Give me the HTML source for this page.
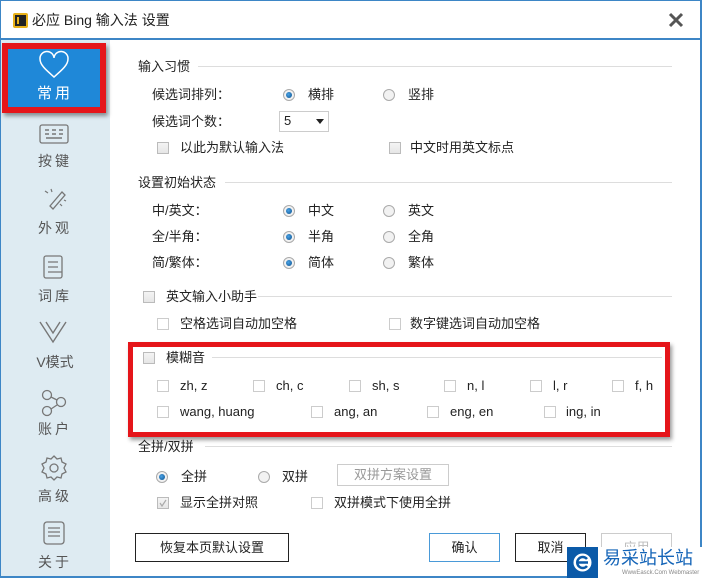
<!DOCTYPE html>
<html><head><meta charset="utf-8">
<style>
*{margin:0;padding:0;box-sizing:border-box}
body{width:702px;height:578px;overflow:hidden;background:#fff;position:relative;font-family:"Liberation Sans","Noto Sans CJK SC","Microsoft YaHei",sans-serif;font-size:13px;color:#222}
.a{position:absolute}
.t{position:absolute;line-height:16px;white-space:nowrap;font-size:13px}
.cb{position:absolute;width:12px;height:12px;border:1px solid #bbb;background:linear-gradient(#f4f4f4,#e6e6e6)}
.cbw{position:absolute;width:12px;height:12px;border:1px solid #ccc;background:#fff}
.rd{position:absolute;width:12px;height:12px;border-radius:50%;border:1px solid #aaa;background:#f2f2f2}
.rd.on::after{content:"";position:absolute;left:2px;top:2px;width:6px;height:6px;border-radius:50%;background:radial-gradient(circle at 40% 40%,#4aa3e6,#0b4f8c)}
.ln{position:absolute;height:1px;background:#ddd}
.btn{position:absolute;border:1px solid #222;background:#fff;text-align:center;line-height:27px;font-size:13px}
.sb{position:absolute;left:0;width:110px;text-align:center;color:#555;font-size:14px;letter-spacing:3px}
svg path,svg rect,svg circle{}
</style></head><body>
<div class="a" style="left:0;top:0;width:702px;height:40px;background:#fff;border-top:1px solid #3d86c6;border-bottom:2px solid #3d86c6"></div>
<div class="a" style="left:13px;top:13px;width:15px;height:15px;background:#e8b11a;border-radius:2px"><div style="position:absolute;left:2px;top:2px;width:11px;height:11px;background:#222"></div><div style="position:absolute;left:4px;top:4px;width:2px;height:7px;background:#e8b11a"></div></div>
<div class="t" style="left:32px;top:12px;font-size:14px">必应 Bing 输入法 设置</div>
<svg class="a" style="left:668px;top:12px" width="16" height="16"><path d="M2 2L14 14M14 2L2 14" stroke="#555" stroke-width="3"/></svg>
<div class="a" style="left:700px;top:0;width:2px;height:578px;background:#3d86c6"></div>
<div class="a" style="left:0;top:0;width:1px;height:578px;background:#3d86c6"></div>
<div class="a" style="left:0;top:576px;width:702px;height:2px;background:#3d86c6"></div>
<div class="a" style="left:1px;top:40px;width:109px;height:536px;background:#deebf2"></div>
<div class="a" style="left:2px;top:43px;width:104px;height:70px;background:#e5151a;box-shadow:2px 3px 4px rgba(0,0,0,.4)"></div>
<div class="a" style="left:8px;top:49px;width:92px;height:58px;background:#1f88d8"></div>
<svg class="a" style="left:37px;top:50px" width="34" height="30"><path d="M17 27C9 20 3 15 3 9a7 7 0 0 1 14-1a7 7 0 0 1 14 1c0 6-6 11-14 18z" fill="none" stroke="#fff" stroke-width="1.5"/></svg>
<div class="sb" style="top:82px;color:#fff;font-size:15px">常用</div>
<svg class="a" style="left:39px;top:124px" width="30" height="20"><rect x="1" y="1" width="28" height="18" rx="2" fill="none" stroke="#777" stroke-width="1.3"/><path d="M6 6h4M13 6h4M20 6h4M6 10h4M13 10h4M20 10h4M7 14h16" stroke="#777" stroke-width="1.5"/></svg>
<div class="sb" style="top:151px">按键</div>
<svg class="a" style="left:40px;top:186px" width="28" height="24"><path d="M10 20L22 6l3 3L13 23z" fill="none" stroke="#777" stroke-width="1.3"/><path d="M5 5l3 2M11 3l1 3M20 18l2 2M24 14l2 1" stroke="#777" stroke-width="1.2"/></svg>
<div class="sb" style="top:218px">外观</div>
<svg class="a" style="left:42px;top:254px" width="24" height="26"><rect x="2" y="2" width="18" height="22" rx="2" fill="none" stroke="#777" stroke-width="1.3"/><path d="M6 8h10M6 13h10M6 18h14" stroke="#777" stroke-width="1.3"/></svg>
<div class="sb" style="top:286px">词库</div>
<svg class="a" style="left:38px;top:320px" width="30" height="24"><path d="M2 2l13 20L28 2M8 2l7 11 7-11" fill="none" stroke="#777" stroke-width="1.4"/></svg>
<div class="sb" style="top:352px;letter-spacing:0">V模式</div>
<svg class="a" style="left:40px;top:389px" width="28" height="28"><circle cx="7" cy="6" r="4.5" fill="none" stroke="#777" stroke-width="1.3"/><circle cx="21" cy="13" r="4.5" fill="none" stroke="#777" stroke-width="1.3"/><circle cx="7" cy="22" r="4.5" fill="none" stroke="#777" stroke-width="1.3"/><path d="M11 8l6 3M11 20l6-4" stroke="#777" stroke-width="1.3"/></svg>
<div class="sb" style="top:419px">账户</div>
<svg class="a" style="left:40px;top:454px" width="28" height="28"><circle cx="14" cy="14" r="4" fill="none" stroke="#777" stroke-width="1.3"/><path d="M14 2l3 3 4-1 1 4 4 2-2 4 2 4-4 2-1 4-4-1-3 3-3-3-4 1-1-4-4-2 2-4-2-4 4-2 1-4 4 1z" fill="none" stroke="#777" stroke-width="1.3"/></svg>
<div class="sb" style="top:486px">高级</div>
<svg class="a" style="left:42px;top:520px" width="24" height="26"><rect x="2" y="2" width="20" height="22" rx="3" fill="none" stroke="#777" stroke-width="1.3"/><path d="M6 8h12M6 12h12M6 16h12" stroke="#777" stroke-width="1.3"/></svg>
<div class="sb" style="top:552px">关于</div>

<div class="t" style="left:138px;top:59px">输入习惯</div><div class="ln" style="left:198px;top:66px;width:474px"></div>
<div class="t" style="left:152px;top:87px">候选词排列：</div>
<div class="rd on" style="left:283px;top:89px"></div><div class="t" style="left:308px;top:87px">横排</div>
<div class="rd" style="left:383px;top:89px"></div><div class="t" style="left:408px;top:87px">竖排</div>
<div class="t" style="left:152px;top:114px">候选词个数：</div>
<div class="a" style="left:279px;top:111px;width:50px;height:21px;border:1px solid #ccc;background:#fff"></div>
<div class="t" style="left:284px;top:113px">5</div>
<svg class="a" style="left:316px;top:119px" width="8" height="5"><path d="M0 0h8L4 5z" fill="#222"/></svg>
<div class="cb" style="left:157px;top:142px"></div><div class="t" style="left:180px;top:140px">以此为默认输入法</div>
<div class="cb" style="left:389px;top:142px"></div><div class="t" style="left:410px;top:140px">中文时用英文标点</div>

<div class="t" style="left:138px;top:175px">设置初始状态</div><div class="ln" style="left:225px;top:182px;width:447px"></div>
<div class="t" style="left:152px;top:203px">中/英文：</div>
<div class="rd on" style="left:283px;top:205px"></div><div class="t" style="left:308px;top:203px">中文</div>
<div class="rd" style="left:383px;top:205px"></div><div class="t" style="left:408px;top:203px">英文</div>
<div class="t" style="left:152px;top:229px">全/半角：</div>
<div class="rd on" style="left:283px;top:231px"></div><div class="t" style="left:308px;top:229px">半角</div>
<div class="rd" style="left:383px;top:231px"></div><div class="t" style="left:408px;top:229px">全角</div>
<div class="t" style="left:152px;top:255px">简/繁体：</div>
<div class="rd on" style="left:283px;top:257px"></div><div class="t" style="left:308px;top:255px">简体</div>
<div class="rd" style="left:383px;top:257px"></div><div class="t" style="left:408px;top:255px">繁体</div>

<div class="cb" style="left:143px;top:291px"></div><div class="t" style="left:166px;top:289px">英文输入小助手</div><div class="ln" style="left:258px;top:296px;width:414px"></div>
<div class="cbw" style="left:157px;top:318px"></div><div class="t" style="left:180px;top:316px">空格选词自动加空格</div>
<div class="cbw" style="left:389px;top:318px"></div><div class="t" style="left:410px;top:316px">数字键选词自动加空格</div>

<div class="a" style="left:128px;top:342px;width:542px;height:95px;border:5px solid #e5151a;box-shadow:2px 3px 4px rgba(0,0,0,.4)"></div>
<div class="cb" style="left:143px;top:352px"></div><div class="t" style="left:166px;top:350px">模糊音</div><div class="ln" style="left:212px;top:357px;width:450px"></div>
<div class="cbw" style="left:157px;top:380px"></div><div class="t" style="left:180px;top:378px">zh, z</div>
<div class="cbw" style="left:253px;top:380px"></div><div class="t" style="left:276px;top:378px">ch, c</div>
<div class="cbw" style="left:349px;top:380px"></div><div class="t" style="left:372px;top:378px">sh, s</div>
<div class="cbw" style="left:444px;top:380px"></div><div class="t" style="left:467px;top:378px">n, l</div>
<div class="cbw" style="left:530px;top:380px"></div><div class="t" style="left:553px;top:378px">l, r</div>
<div class="cbw" style="left:612px;top:380px"></div><div class="t" style="left:635px;top:378px">f, h</div>
<div class="cbw" style="left:157px;top:406px"></div><div class="t" style="left:180px;top:404px">wang, huang</div>
<div class="cbw" style="left:311px;top:406px"></div><div class="t" style="left:334px;top:404px">ang, an</div>
<div class="cbw" style="left:427px;top:406px"></div><div class="t" style="left:450px;top:404px">eng, en</div>
<div class="cbw" style="left:544px;top:406px"></div><div class="t" style="left:566px;top:404px">ing, in</div>

<div class="t" style="left:138px;top:439px">全拼/双拼</div><div class="ln" style="left:205px;top:446px;width:467px"></div>
<div class="rd on" style="left:156px;top:471px"></div><div class="t" style="left:181px;top:469px">全拼</div>
<div class="rd" style="left:258px;top:471px"></div><div class="t" style="left:282px;top:469px">双拼</div>
<div class="a" style="left:337px;top:464px;width:112px;height:22px;border:1px solid #ccc;background:#fff;color:#999;text-align:center;line-height:20px">双拼方案设置</div>
<div class="cb" style="left:157px;top:497px"><svg width="10" height="10" style="position:absolute;left:0;top:0"><path d="M2 5l2 3 4-6" fill="none" stroke="#aaa" stroke-width="1.2"/></svg></div><div class="t" style="left:180px;top:495px">显示全拼对照</div>
<div class="cbw" style="left:311px;top:497px"></div><div class="t" style="left:334px;top:495px">双拼模式下使用全拼</div>

<div class="btn" style="left:135px;top:533px;width:154px;height:29px">恢复本页默认设置</div>
<div class="btn" style="left:429px;top:533px;width:71px;height:29px;border-color:#4a9ad8">确认</div>
<div class="btn" style="left:515px;top:533px;width:71px;height:29px">取消</div>
<div class="btn" style="left:601px;top:533px;width:71px;height:29px;border-color:#ccc;color:#bbb">应用</div>

<div class="a" style="left:567px;top:547px;width:135px;height:31px;background:#fff"></div>
<div class="a" style="left:567px;top:547px;width:31px;height:31px;background:#0b5aa8"></div>
<svg class="a" style="left:571px;top:551px" width="23" height="23"><circle cx="11.5" cy="11.5" r="9" fill="#fff"/><path d="M6 11.5h11M16 8a5.5 5.5 0 1 0 0 7" fill="none" stroke="#0b5aa8" stroke-width="2.5"/></svg>
<div class="t" style="left:603px;top:547px;font-size:18px;line-height:22px;color:#1565b8">易采站长站</div>
<div class="t" style="left:622px;top:570px;font-size:6px;line-height:7px;color:#888">WwwEasck.Com Webmaster</div>
</body></html>
